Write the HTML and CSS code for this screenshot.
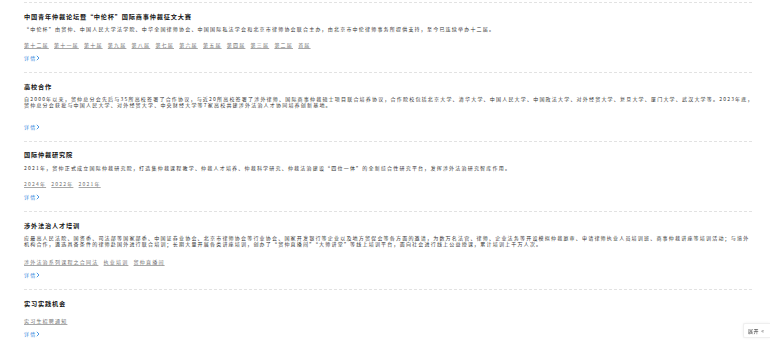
FILE: index.html
```html
<!DOCTYPE html>
<html lang="zh-CN">
<head>
<meta charset="utf-8">
<title>贸仲</title>
<link rel="stylesheet" href="styles.css">
</head>
<body>
<div class="list">
  <section class="item">
    <h3 class="title">中国青年仲裁论坛暨“中伦杯”国际商事仲裁征文大赛</h3>
    <p class="desc">“中伦杯”由贸仲、中国人民大学法学院、中华全国律师协会、中国国际私法学会和北京市律师协会联合主办，由北京市中伦律师事务所提供支持，至今已连续举办十二届。</p>
    <div class="links">
      <a href="#">第十二届</a><a href="#">第十一届</a><a href="#">第十届</a><a href="#">第九届</a><a href="#">第八届</a><a href="#">第七届</a><a href="#">第六届</a><a href="#">第五届</a><a href="#">第四届</a><a href="#">第三届</a><a href="#">第二届</a><a href="#">首届</a>
    </div>
    <a class="more" href="#">详情<svg class="chev" viewBox="0 0 4 6" width="4" height="6"><polyline points="0.8,0.8 3,3 0.8,5.2" fill="none" stroke="currentColor" stroke-width="0.9"/></svg></a>
  </section>
  <section class="item">
    <h3 class="title">高校合作</h3>
    <p class="desc">自2000年以来，贸仲总分会先后与35所高校签署了合作协议，与近20所高校签署了涉外律师、国际商事仲裁硕士项目联合培养协议，合作院校包括北京大学、清华大学、中国人民大学、中国政法大学、对外经贸大学、复旦大学、厦门大学、武汉大学等。2023年底，贸仲总分会获批与中国人民大学、对外经贸大学、中央财经大学等7家高校共建涉外法治人才协同培养创新基地。</p>
    <div class="links links-empty"></div>
    <a class="more" href="#">详情<svg class="chev" viewBox="0 0 4 6" width="4" height="6"><polyline points="0.8,0.8 3,3 0.8,5.2" fill="none" stroke="currentColor" stroke-width="0.9"/></svg></a>
  </section>
  <section class="item">
    <h3 class="title">国际仲裁研究院</h3>
    <p class="desc">2021年，贸仲正式成立国际仲裁研究院，打造集仲裁课程教学、仲裁人才培养、仲裁科学研究、仲裁法治建设“四位一体”的全新综合性研究平台，发挥涉外法治研究智库作用。</p>
    <div class="links">
      <a href="#">2024年</a><a href="#">2022年</a><a href="#">2021年</a>
    </div>
    <a class="more" href="#">详情<svg class="chev" viewBox="0 0 4 6" width="4" height="6"><polyline points="0.8,0.8 3,3 0.8,5.2" fill="none" stroke="currentColor" stroke-width="0.9"/></svg></a>
  </section>
  <section class="item">
    <h3 class="title">涉外法治人才培训</h3>
    <p class="desc">应最高人民法院、国资委、司法部等国家部委、中国证券业协会、北京市律师协会等行业协会、国家开发银行等企业以及地方贸促会等各方面的邀请，为数万名法官、律师、企业法务等开设模拟仲裁庭审、申请律师执业人员培训班、商事仲裁讲座等培训活动；与境外机构合作，遴选具备条件的律师赴国外进行联合培训；长期大量开展各类讲座培训，创办了“贸仲直播间”“大师讲堂”等线上培训平台，面向社会进行线上公益授课，累计培训上千万人次。</p>
    <div class="links links-loose">
      <a href="#">涉外法治系列课程之合同法</a><a href="#">执业培训</a><a href="#">贸仲直播间</a>
    </div>
    <a class="more" href="#">详情<svg class="chev" viewBox="0 0 4 6" width="4" height="6"><polyline points="0.8,0.8 3,3 0.8,5.2" fill="none" stroke="currentColor" stroke-width="0.9"/></svg></a>
  </section>
  <section class="item">
    <h3 class="title">实习实践机会</h3>
    <div class="links">
      <a href="#">实习生招聘通知</a>
    </div>
    <a class="more" href="#">详情<svg class="chev" viewBox="0 0 4 6" width="4" height="6"><polyline points="0.8,0.8 3,3 0.8,5.2" fill="none" stroke="currentColor" stroke-width="0.9"/></svg></a>
  </section>
</div>
<button class="expand" type="button">展开<span class="expand-icon">«</span></button>
</body>
</html>
```
FILE: styles.css
```css
html, body {
  margin: 0;
  padding: 0;
  background: #fff;
}

body {
  font-family: "Noto Sans CJK SC", "Noto Sans", sans-serif;
  color: #333;
  overflow: hidden;
}

.list {
  width: 731px;
  margin-left: 24px;
  padding-top: 2px;
}

.item {
  border-top: 1px dashed #e2e2e2;
  padding: 9.5px 0 10px;
  width: 728px;
}

.title {
  margin: 0;
  font-size: 6.2px;
  letter-spacing: 0.8px;
  line-height: 8px;
  font-weight: 700;
  color: #111;
}

.desc {
  margin: 5.8px 0 0;
  width: 731px;
  font-size: 5px;
  letter-spacing: 1.2px;
  line-height: 5.6px;
  color: #333;
}

.links {
  margin-top: 9.25px;
  display: flex;
  gap: 5.2px;
  font-size: 5px;
  letter-spacing: 1.2px;
  line-height: 8px;
}

.links a {
  color: #6e6e6e;
  text-decoration: underline;
  text-decoration-color: #a8a8a8;
  text-underline-offset: 1px;
}

.links-empty {
  min-height: 1px;
}

.links-loose {
  margin-top: 11.5px;
}

.more {
  margin-top: 5px;
  display: flex;
  align-items: center;
  font-size: 5px;
  letter-spacing: 1.2px;
  line-height: 8px;
  color: #3a8be0;
  text-decoration: none;
}

.chev {
  display: block;
}

.expand {
  position: fixed;
  right: 0;
  bottom: 3px;
  width: 27px;
  height: 15px;
  padding: 0 0 0 4px;
  display: flex;
  align-items: center;
  gap: 2px;
  border: 1px solid #efefef;
  border-right: none;
  border-radius: 2px 0 0 2px;
  background: #fff;
  box-shadow: 0 0 3px rgba(0, 0, 0, 0.06);
  font-family: "Noto Sans CJK SC", sans-serif;
  font-size: 5px;
  letter-spacing: 0.6px;
  line-height: 8px;
  color: #333;
}

.expand-icon {
  font-size: 6px;
  color: #666;
}
```
